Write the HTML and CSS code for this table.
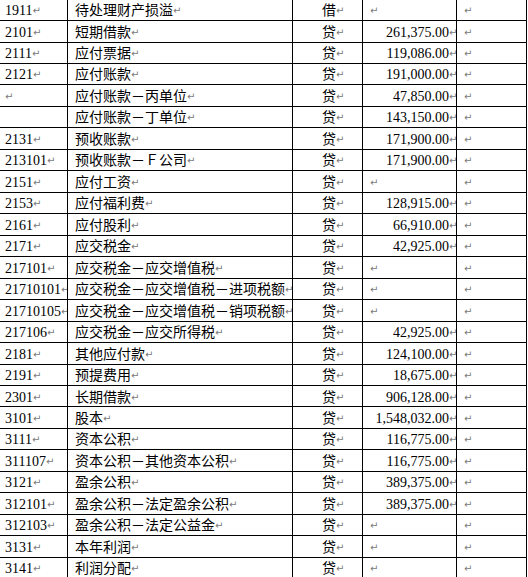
FILE: index.html
```html
<!DOCTYPE html>
<html lang="zh-CN">
<head>
<meta charset="utf-8">
<title>会计科目</title>
<link rel="stylesheet" href="styles.css">
</head>
<body>
<div class="sheet">
  <div class="row"><div class="c code">1911<span class="pm">↵</span></div><div class="c name">待处理财产损溢<span class="pm">↵</span></div><div class="c dir">借<span class="pm">↵</span></div><div class="c amt empty"><span class="pm">↵</span></div><div class="c last"><span class="pm">↵</span></div></div>
  <div class="row"><div class="c code">2101<span class="pm">↵</span></div><div class="c name">短期借款<span class="pm">↵</span></div><div class="c dir">贷<span class="pm">↵</span></div><div class="c amt">261,375.00<span class="pm">↵</span></div><div class="c last"><span class="pm">↵</span></div></div>
  <div class="row"><div class="c code">2111<span class="pm">↵</span></div><div class="c name">应付票据<span class="pm">↵</span></div><div class="c dir">贷<span class="pm">↵</span></div><div class="c amt">119,086.00<span class="pm">↵</span></div><div class="c last"><span class="pm">↵</span></div></div>
  <div class="row"><div class="c code">2121<span class="pm">↵</span></div><div class="c name">应付账款<span class="pm">↵</span></div><div class="c dir">贷<span class="pm">↵</span></div><div class="c amt">191,000.00<span class="pm">↵</span></div><div class="c last"><span class="pm">↵</span></div></div>
  <div class="row"><div class="c code"><span class="pm">↵</span></div><div class="c name">应付账款－丙单位<span class="pm">↵</span></div><div class="c dir">贷<span class="pm">↵</span></div><div class="c amt">47,850.00<span class="pm">↵</span></div><div class="c last"><span class="pm">↵</span></div></div>
  <div class="row"><div class="c code"></div><div class="c name">应付账款－丁单位<span class="pm">↵</span></div><div class="c dir">贷<span class="pm">↵</span></div><div class="c amt">143,150.00<span class="pm">↵</span></div><div class="c last"><span class="pm">↵</span></div></div>
  <div class="row"><div class="c code">2131<span class="pm">↵</span></div><div class="c name">预收账款<span class="pm">↵</span></div><div class="c dir">贷<span class="pm">↵</span></div><div class="c amt">171,900.00<span class="pm">↵</span></div><div class="c last"><span class="pm">↵</span></div></div>
  <div class="row"><div class="c code">213101<span class="pm">↵</span></div><div class="c name">预收账款－Ｆ公司<span class="pm">↵</span></div><div class="c dir">贷<span class="pm">↵</span></div><div class="c amt">171,900.00<span class="pm">↵</span></div><div class="c last"><span class="pm">↵</span></div></div>
  <div class="row"><div class="c code">2151<span class="pm">↵</span></div><div class="c name">应付工资<span class="pm">↵</span></div><div class="c dir">贷<span class="pm">↵</span></div><div class="c amt empty"><span class="pm">↵</span></div><div class="c last"><span class="pm">↵</span></div></div>
  <div class="row"><div class="c code">2153<span class="pm">↵</span></div><div class="c name">应付福利费<span class="pm">↵</span></div><div class="c dir">贷<span class="pm">↵</span></div><div class="c amt">128,915.00<span class="pm">↵</span></div><div class="c last"><span class="pm">↵</span></div></div>
  <div class="row"><div class="c code">2161<span class="pm">↵</span></div><div class="c name">应付股利<span class="pm">↵</span></div><div class="c dir">贷<span class="pm">↵</span></div><div class="c amt">66,910.00<span class="pm">↵</span></div><div class="c last"><span class="pm">↵</span></div></div>
  <div class="row"><div class="c code">2171<span class="pm">↵</span></div><div class="c name">应交税金<span class="pm">↵</span></div><div class="c dir">贷<span class="pm">↵</span></div><div class="c amt">42,925.00<span class="pm">↵</span></div><div class="c last"><span class="pm">↵</span></div></div>
  <div class="row"><div class="c code">217101<span class="pm">↵</span></div><div class="c name">应交税金－应交增值税<span class="pm">↵</span></div><div class="c dir">贷<span class="pm">↵</span></div><div class="c amt empty"><span class="pm">↵</span></div><div class="c last"><span class="pm">↵</span></div></div>
  <div class="row"><div class="c code">21710101<span class="pm">↵</span></div><div class="c name">应交税金－应交增值税－进项税额<span class="pm">↵</span></div><div class="c dir">贷<span class="pm">↵</span></div><div class="c amt empty"><span class="pm">↵</span></div><div class="c last"><span class="pm">↵</span></div></div>
  <div class="row"><div class="c code">21710105<span class="pm">↵</span></div><div class="c name">应交税金－应交增值税－销项税额<span class="pm">↵</span></div><div class="c dir">贷<span class="pm">↵</span></div><div class="c amt empty"><span class="pm">↵</span></div><div class="c last"><span class="pm">↵</span></div></div>
  <div class="row"><div class="c code">217106<span class="pm">↵</span></div><div class="c name">应交税金－应交所得税<span class="pm">↵</span></div><div class="c dir">贷<span class="pm">↵</span></div><div class="c amt">42,925.00<span class="pm">↵</span></div><div class="c last"><span class="pm">↵</span></div></div>
  <div class="row"><div class="c code">2181<span class="pm">↵</span></div><div class="c name">其他应付款<span class="pm">↵</span></div><div class="c dir">贷<span class="pm">↵</span></div><div class="c amt">124,100.00<span class="pm">↵</span></div><div class="c last"><span class="pm">↵</span></div></div>
  <div class="row"><div class="c code">2191<span class="pm">↵</span></div><div class="c name">预提费用<span class="pm">↵</span></div><div class="c dir">贷<span class="pm">↵</span></div><div class="c amt">18,675.00<span class="pm">↵</span></div><div class="c last"><span class="pm">↵</span></div></div>
  <div class="row"><div class="c code">2301<span class="pm">↵</span></div><div class="c name">长期借款<span class="pm">↵</span></div><div class="c dir">贷<span class="pm">↵</span></div><div class="c amt">906,128.00<span class="pm">↵</span></div><div class="c last"><span class="pm">↵</span></div></div>
  <div class="row"><div class="c code">3101<span class="pm">↵</span></div><div class="c name">股本<span class="pm">↵</span></div><div class="c dir">贷<span class="pm">↵</span></div><div class="c amt">1,548,032.00<span class="pm">↵</span></div><div class="c last"><span class="pm">↵</span></div></div>
  <div class="row"><div class="c code">3111<span class="pm">↵</span></div><div class="c name">资本公积<span class="pm">↵</span></div><div class="c dir">贷<span class="pm">↵</span></div><div class="c amt">116,775.00<span class="pm">↵</span></div><div class="c last"><span class="pm">↵</span></div></div>
  <div class="row"><div class="c code">311107<span class="pm">↵</span></div><div class="c name">资本公积－其他资本公积<span class="pm">↵</span></div><div class="c dir">贷<span class="pm">↵</span></div><div class="c amt">116,775.00<span class="pm">↵</span></div><div class="c last"><span class="pm">↵</span></div></div>
  <div class="row"><div class="c code">3121<span class="pm">↵</span></div><div class="c name">盈余公积<span class="pm">↵</span></div><div class="c dir">贷<span class="pm">↵</span></div><div class="c amt">389,375.00<span class="pm">↵</span></div><div class="c last"><span class="pm">↵</span></div></div>
  <div class="row"><div class="c code">312101<span class="pm">↵</span></div><div class="c name">盈余公积－法定盈余公积<span class="pm">↵</span></div><div class="c dir">贷<span class="pm">↵</span></div><div class="c amt">389,375.00<span class="pm">↵</span></div><div class="c last"><span class="pm">↵</span></div></div>
  <div class="row"><div class="c code">312103<span class="pm">↵</span></div><div class="c name">盈余公积－法定公益金<span class="pm">↵</span></div><div class="c dir">贷<span class="pm">↵</span></div><div class="c amt empty"><span class="pm">↵</span></div><div class="c last"><span class="pm">↵</span></div></div>
  <div class="row"><div class="c code">3131<span class="pm">↵</span></div><div class="c name">本年利润<span class="pm">↵</span></div><div class="c dir">贷<span class="pm">↵</span></div><div class="c amt empty"><span class="pm">↵</span></div><div class="c last"><span class="pm">↵</span></div></div>
  <div class="row"><div class="c code">3141<span class="pm">↵</span></div><div class="c name">利润分配<span class="pm">↵</span></div><div class="c dir">贷<span class="pm">↵</span></div><div class="c amt empty"><span class="pm">↵</span></div><div class="c last"><span class="pm">↵</span></div></div>
</div>
</body>
</html>
```
FILE: styles.css
```css
html, body {
  margin: 0;
  padding: 0;
  background: #fff;
}
body {
  overflow: hidden;
  font-family: "Liberation Serif", "Noto Sans CJK SC", serif;
  font-size: 14px;
  color: #000;
}
.sheet {
  margin-top: -0.45px;
  margin-left: -2px;
  width: 529px;
}
.row {
  display: grid;
  grid-template-columns: 70px 225px 70px 94px 70px;
  height: 21.47px;
}
.c {
  box-sizing: border-box;
  border-right: 1px solid #000;
  border-bottom: 1px solid #000;
  padding: 1.5px 0 0 7px;
  line-height: 19px;
  white-space: nowrap;
  overflow: hidden;
}
.dir {
  padding-left: 29px;
}
.amt {
  text-align: right;
  padding-left: 0;
  padding-right: 0;
}
.amt.empty {
  text-align: left;
  padding-left: 7px;
}
.pm {
  display: inline-block;
  width: 7px;
  font-family: "DejaVu Sans", sans-serif;
  font-size: 10px;
  color: #7a7a7a;
  vertical-align: 1px;
  line-height: 10px;
}
```
